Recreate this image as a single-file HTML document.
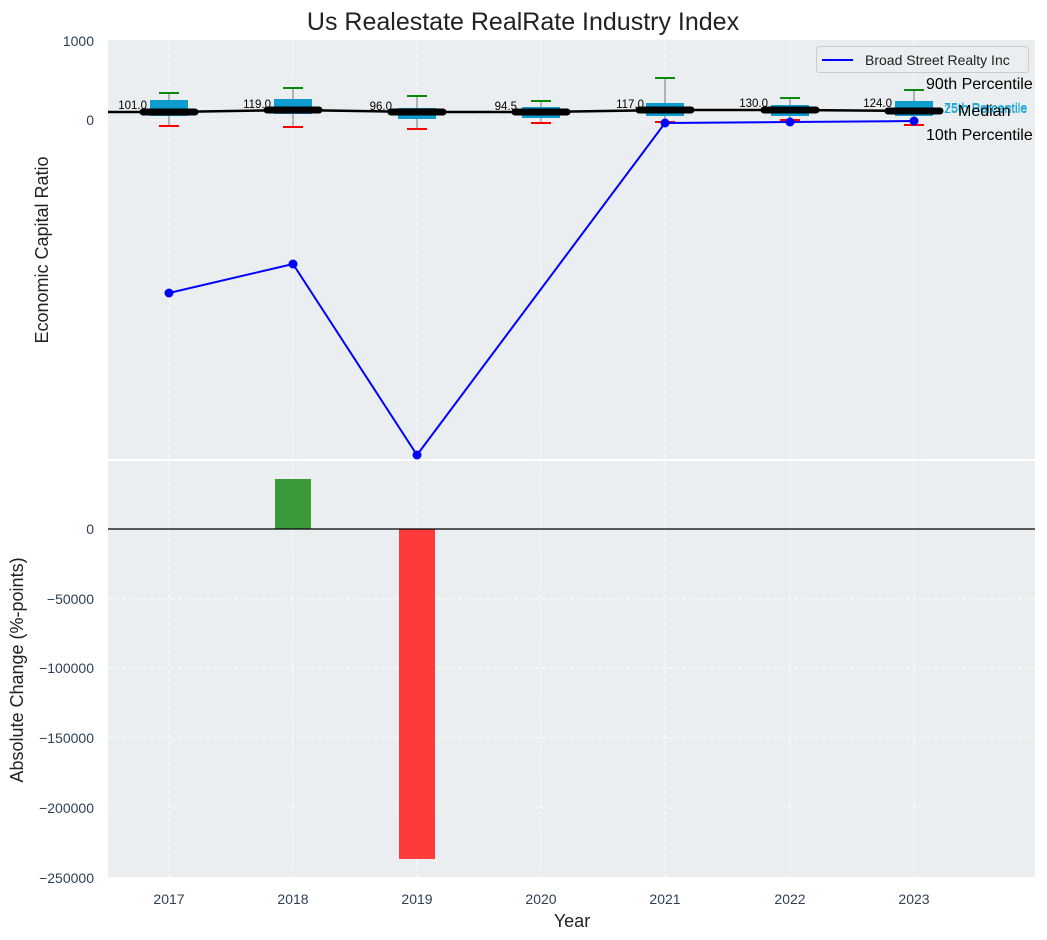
<!DOCTYPE html>
<html><head><meta charset="utf-8"><style>
html,body{margin:0;padding:0;background:#fff;}
svg{display:block;font-family:"Liberation Sans","DejaVu Sans",sans-serif;}
</style></head><body>
<svg width="1047" height="940" viewBox="0 0 1047 940" xmlns="http://www.w3.org/2000/svg">
<rect x="0" y="0" width="1047" height="940" fill="#fff"/>
<text x="523" y="30" font-size="25" text-anchor="middle" fill="#222">Us Realestate RealRate Industry Index</text>
<rect x="108" y="40" width="927" height="419" fill="#eaeef0"/>
<g stroke="#fff" stroke-width="1" stroke-dasharray="4,3" opacity="0.9">
<line x1="169" y1="40" x2="169" y2="459"/><line x1="293" y1="40" x2="293" y2="459"/><line x1="417" y1="40" x2="417" y2="459"/><line x1="541" y1="40" x2="541" y2="459"/><line x1="665" y1="40" x2="665" y2="459"/><line x1="790" y1="40" x2="790" y2="459"/><line x1="914" y1="40" x2="914" y2="459"/>
<line x1="108" y1="120" x2="1035" y2="120"/>
</g>
<text x="94" y="46" font-size="14" text-anchor="end" fill="#2e3f55">1000</text>
<text x="94" y="125" font-size="14" text-anchor="end" fill="#2e3f55">0</text>
<text transform="translate(48,250) rotate(-90)" font-size="18" text-anchor="middle" fill="#222">Economic Capital Ratio</text>
<g stroke-width="2">
<g><line x1="169" y1="93" x2="169" y2="126" stroke="#777" stroke-width="1"/><rect x="150" y="100" width="38" height="16" fill="#0e9ccf"/><line x1="159" y1="93" x2="179" y2="93" stroke="#0a8a0a"/><line x1="159" y1="126" x2="179" y2="126" stroke="#f00"/></g>
<g><line x1="293" y1="88" x2="293" y2="127" stroke="#777" stroke-width="1"/><rect x="274" y="99" width="38" height="15" fill="#0e9ccf"/><line x1="283" y1="88" x2="303" y2="88" stroke="#0a8a0a"/><line x1="283" y1="127" x2="303" y2="127" stroke="#f00"/></g>
<g><line x1="417" y1="96" x2="417" y2="129" stroke="#777" stroke-width="1"/><rect x="398" y="108" width="38" height="11" fill="#0e9ccf"/><line x1="407" y1="96" x2="427" y2="96" stroke="#0a8a0a"/><line x1="407" y1="129" x2="427" y2="129" stroke="#f00"/></g>
<g><line x1="541" y1="101" x2="541" y2="123" stroke="#777" stroke-width="1"/><rect x="522" y="107" width="38" height="11" fill="#0e9ccf"/><line x1="531" y1="101" x2="551" y2="101" stroke="#0a8a0a"/><line x1="531" y1="123" x2="551" y2="123" stroke="#f00"/></g>
<g><line x1="665" y1="78" x2="665" y2="122" stroke="#777" stroke-width="1"/><rect x="646" y="103" width="38" height="13" fill="#0e9ccf"/><line x1="655" y1="78" x2="675" y2="78" stroke="#0a8a0a"/><line x1="655" y1="122" x2="675" y2="122" stroke="#f00"/></g>
<g><line x1="790" y1="98" x2="790" y2="120" stroke="#777" stroke-width="1"/><rect x="771" y="105" width="38" height="11" fill="#0e9ccf"/><line x1="780" y1="98" x2="800" y2="98" stroke="#0a8a0a"/><line x1="780" y1="120" x2="800" y2="120" stroke="#f00"/></g>
<g><line x1="914" y1="90" x2="914" y2="125" stroke="#777" stroke-width="1"/><rect x="895" y="101" width="38" height="15" fill="#0e9ccf"/><line x1="904" y1="90" x2="924" y2="90" stroke="#0a8a0a"/><line x1="904" y1="125" x2="924" y2="125" stroke="#f00"/></g>
</g>
<polyline points="108,112 169,112 293,110 417,112 541,112 665,110 790,110 914,111 940,111" fill="none" stroke="#000" stroke-width="2.5"/>
<g stroke="#000" stroke-width="7" stroke-linecap="round">
<line x1="143" y1="112" x2="195" y2="112"/><line x1="267" y1="110" x2="319" y2="110"/><line x1="391" y1="112" x2="443" y2="112"/><line x1="515" y1="112" x2="567" y2="112"/><line x1="639" y1="110" x2="691" y2="110"/><line x1="764" y1="110" x2="816" y2="110"/><line x1="888" y1="111" x2="940" y2="111"/>
</g>
<g font-size="11.5" fill="#000" text-anchor="end">
<text x="147" y="109">101.0</text><text x="271" y="108">119.0</text><text x="392" y="110">96.0</text><text x="517" y="110">94.5</text><text x="644" y="108">117.0</text><text x="768" y="107">130.0</text><text x="892" y="107">124.0</text>
</g>
<text x="944" y="112" font-size="12.5" fill="#1aa7d8">75th Percentile</text>
<text x="944" y="113" font-size="12.5" fill="#1aa7d8">25th Percentile</text>
<text x="926" y="89" font-size="16" fill="#000">90th Percentile</text>
<text x="958" y="116" font-size="16" fill="#000">Median</text>
<text x="926" y="140" font-size="16" fill="#000">10th Percentile</text>
<polyline points="169,293 293,264 417,455 665,123 790,122 914,121" fill="none" stroke="#0000ff" stroke-width="2"/>
<g fill="#0000ff"><circle cx="169" cy="293" r="4.5"/><circle cx="293" cy="264" r="4.5"/><circle cx="417" cy="455" r="4.5"/><circle cx="665" cy="123" r="4.5"/><circle cx="790" cy="122" r="4.5"/><circle cx="914" cy="121" r="4.5"/></g>
<rect x="816.5" y="46.5" width="212" height="26" rx="3" fill="#eaeef0" stroke="#ccc"/>
<line x1="822" y1="60" x2="853" y2="60" stroke="#0000ff" stroke-width="2"/>
<text x="865" y="65" font-size="14" fill="#222">Broad Street Realty Inc</text>
<rect x="108" y="461" width="927" height="416" fill="#eaeef0"/>
<g stroke="#fff" stroke-width="1" stroke-dasharray="4,3" opacity="0.9">
<line x1="169" y1="461" x2="169" y2="877"/><line x1="293" y1="461" x2="293" y2="877"/><line x1="417" y1="461" x2="417" y2="877"/><line x1="541" y1="461" x2="541" y2="877"/><line x1="665" y1="461" x2="665" y2="877"/><line x1="790" y1="461" x2="790" y2="877"/><line x1="914" y1="461" x2="914" y2="877"/>
<line x1="108" y1="599" x2="1035" y2="599"/><line x1="108" y1="668" x2="1035" y2="668"/><line x1="108" y1="738" x2="1035" y2="738"/><line x1="108" y1="808" x2="1035" y2="808"/>
</g>
<rect x="275" y="479" width="36" height="50" fill="#3a9a3a"/>
<rect x="399" y="529" width="36" height="330" fill="#fd3b3b"/>
<line x1="108" y1="529" x2="1035" y2="529" stroke="#000" stroke-width="1.2"/>
<g font-size="14" fill="#2e3f55" text-anchor="end">
<text x="94" y="534">0</text><text x="94" y="604">−50000</text><text x="94" y="673">−100000</text><text x="94" y="743">−150000</text><text x="94" y="813">−200000</text><text x="94" y="883">−250000</text>
</g>
<text transform="translate(23,670) rotate(-90)" font-size="18" text-anchor="middle" fill="#222">Absolute Change (%-points)</text>
<g font-size="14" fill="#2e3f55" text-anchor="middle">
<text x="169" y="904">2017</text><text x="293" y="904">2018</text><text x="417" y="904">2019</text><text x="541" y="904">2020</text><text x="665" y="904">2021</text><text x="790" y="904">2022</text><text x="914" y="904">2023</text>
</g>
<text x="572" y="927" font-size="18" text-anchor="middle" fill="#222">Year</text>
</svg>
</body></html>
